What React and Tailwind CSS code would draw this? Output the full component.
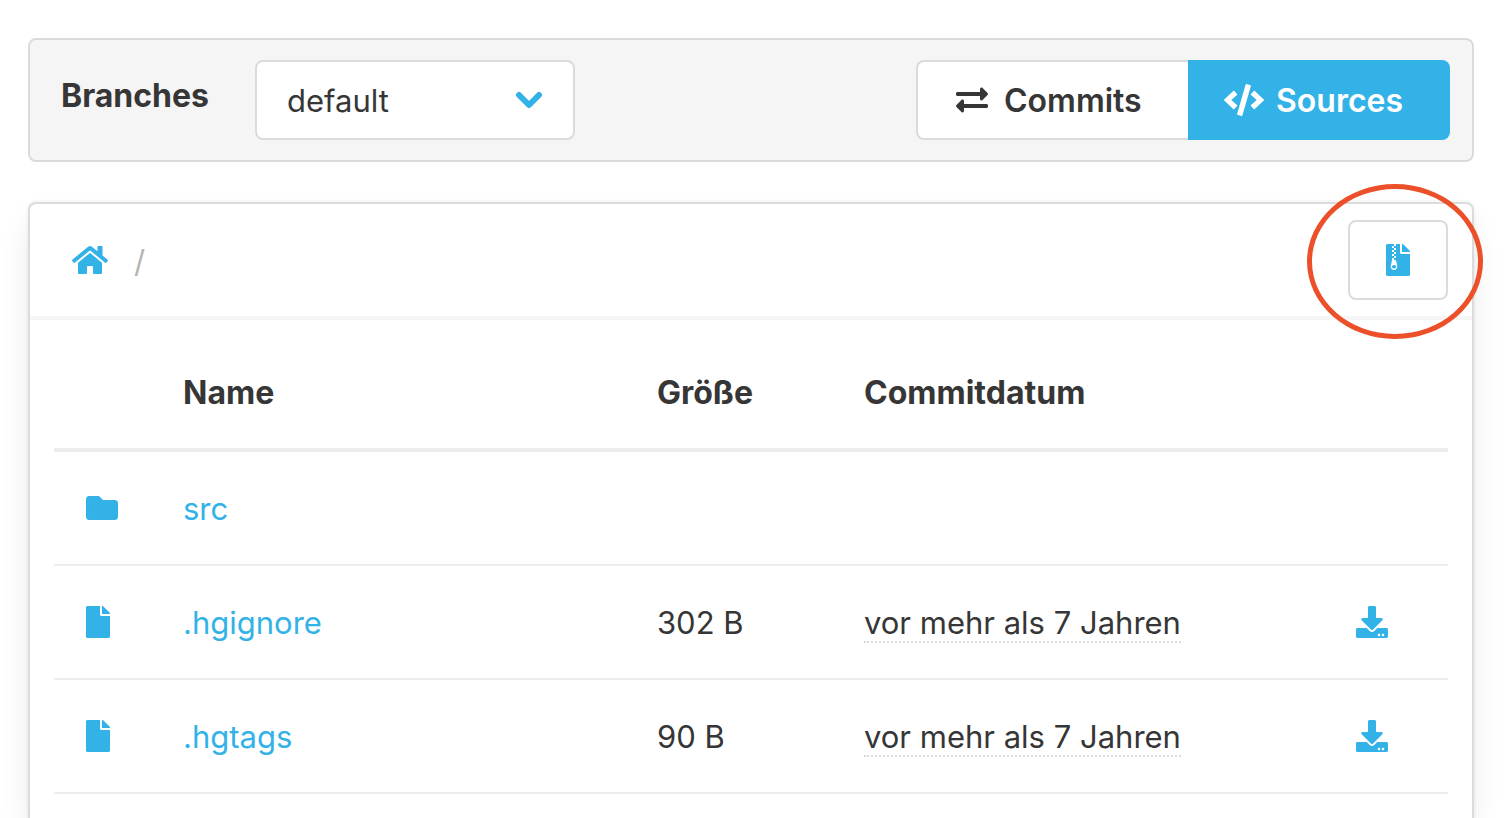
import { FaCode, FaDownload, FaExchangeAlt, FaFile, FaFileArchive, FaFolder, FaHome } from "react-icons/fa";

const entries = [
  { name: "src", folder: true },
  { name: ".hgignore", size: "302 B", date: "vor mehr als 7 Jahren" },
  { name: ".hgtags", size: "90 B", date: "vor mehr als 7 Jahren" },
];

const headCell = "border-b-4 border-[#ededed] px-8 pb-1.5 text-[32px] font-bold";
const iconCell = "border-b-2 border-[#ededed] px-8 text-[#33b2e8]";
const textCell = "border-b-2 border-[#ededed] px-8 pt-0.5 whitespace-nowrap";

function BranchBar() {
  return (
    <section className="flex items-start rounded-lg border-2 border-[#dbdbdb] bg-[#f5f5f5] py-5 pr-[22px] pl-[31px]">
      <label htmlFor="branch" className="w-[194px] shrink-0 pt-3 text-[32px] leading-12 font-bold">
        Branches
      </label>
      <div className="relative w-80">
        <select
          id="branch"
          defaultValue="default"
          className="h-20 w-full appearance-none rounded-lg border-2 border-[#dbdbdb] bg-white pt-0.5 pr-20 pl-[30px]"
        >
          <option>default</option>
        </select>
        <svg
          aria-hidden="true"
          viewBox="0 0 28 20"
          className="pointer-events-none absolute top-[30px] right-8 h-5 w-7 text-[#33b2e8]"
          fill="none"
          stroke="currentColor"
          strokeWidth="6"
          strokeLinecap="round"
          strokeLinejoin="round"
        >
          <path d="M4 5 L14 15 L24 5" />
        </svg>
      </div>
      <nav className="ml-auto flex text-[32px] leading-12 font-semibold">
        <a
          href="#commits"
          className="flex h-20 w-[272px] items-center gap-4 rounded-l-lg border-2 border-r-0 border-[#dbdbdb] bg-white pl-[38px]"
        >
          <FaExchangeAlt className="size-8" />
          <span className="pt-0.5">Commits</span>
        </a>
        <a
          href="#sources"
          className="flex h-20 w-[262px] items-center gap-3 rounded-r-lg bg-[#33b2e8] pl-9 text-white"
        >
          <FaCode className="h-8 w-10" />
          <span className="pt-0.5">Sources</span>
        </a>
      </nav>
    </section>
  );
}

function Breadcrumb() {
  return (
    <div className="flex items-center justify-between border-b-4 border-[#f5f5f5] py-4 pr-6 pl-[42px]">
      <nav className="flex items-center gap-[26px]">
        <a href="#root" aria-label="Home" className="text-[#33b2e8]">
          <FaHome className="h-8 w-9" />
        </a>
        <span className="pt-1 text-[#b5b5b5]">/</span>
      </nav>
      <div className="relative">
        <button
          type="button"
          aria-label="Download archive"
          className="flex h-20 w-25 items-center justify-center rounded-lg border-2 border-[#dbdbdb] bg-white text-[#33b2e8]"
        >
          <FaFileArchive className="h-8 w-6" />
        </button>
        <div className="pointer-events-none absolute -top-9 -left-[41px] h-[155px] w-44 rounded-[50%] border-5 border-[#ec502b]" />
      </div>
    </div>
  );
}

function FileTable() {
  return (
    <table className="w-full table-fixed border-separate border-spacing-0 text-left">
      <thead>
        <tr className="h-[108px]">
          <th className={headCell + " w-[97px]"} />
          <th className={headCell + " w-[34%]"}>Name</th>
          <th className={headCell + " w-[207px]"}>Größe</th>
          <th className={headCell}>Commitdatum</th>
          <th className={headCell + " w-[124px]"} />
        </tr>
      </thead>
      <tbody>
        {entries.map((entry) => (
          <tr key={entry.name} className="h-[114px]">
            <td className={iconCell}>
              {entry.folder ? <FaFolder className="size-8" /> : <FaFile className="h-8 w-6" />}
            </td>
            <td className={textCell}>
              <a href={"#" + entry.name} className="text-[#33b2e8]">
                {entry.name}
              </a>
            </td>
            <td className={textCell}>{entry.size}</td>
            <td className={textCell}>
              {entry.date && <time className="border-b-2 border-dotted border-[#dbdbdb]">{entry.date}</time>}
            </td>
            <td className={iconCell}>
              {!entry.folder && (
                <a href={"#download-" + entry.name} aria-label={"Download " + entry.name} className="block">
                  <FaDownload className="size-8" />
                </a>
              )}
            </td>
          </tr>
        ))}
      </tbody>
    </table>
  );
}

export default function App() {
  return (
    <main className="flex min-h-screen flex-col gap-10 overflow-hidden bg-white pt-[38px] pr-9 pl-7 font-['Inter',sans-serif] text-[31px] leading-12 text-[#363636]">
      <BranchBar />
      <section className="flex-1 rounded-t-lg border-2 border-b-0 border-[#dbdbdb] bg-white shadow-[0_16px_32px_-4px_rgba(10,10,10,0.1),0_0_0_2px_rgba(10,10,10,0.02)]">
        <Breadcrumb />
        <div className="px-6 pt-6">
          <FileTable />
        </div>
      </section>
    </main>
  );
}
